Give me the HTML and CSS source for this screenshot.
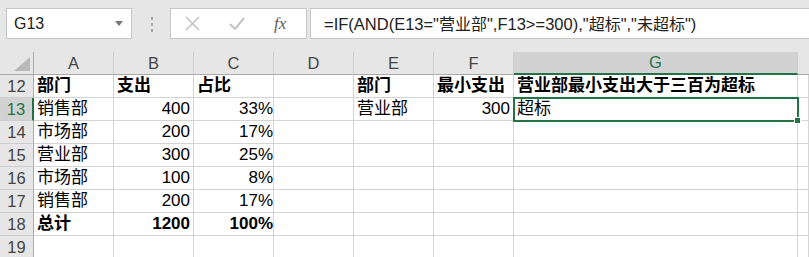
FILE: index.html
```html
<!DOCTYPE html>
<html lang="zh-CN">
<head>
    <meta charset="UTF-8">
    <title>Sheet</title>
    <link rel="stylesheet" href="styles.css">
</head>
<body>
    <div class="toolbar">
        <div class="namebox">
            <span>G13</span>
            <svg width="8" height="5" viewBox="0 0 8 5"><polygon points="0,0 8,0 4,5" fill="#777"/></svg>
        </div>
        <div class="grip"><i></i><i></i><i></i></div>
        <div class="fxbox">
            <svg width="15" height="15" viewBox="0 0 15 15"><path d="M1 1 L14 14 M14 1 L1 14" stroke="#c3c3c3" stroke-width="1.6" fill="none"/></svg>
            <svg width="16" height="13" viewBox="0 0 16 13"><path d="M1 7 L6 12 L15 1" stroke="#c3c3c3" stroke-width="2" fill="none"/></svg>
            <span class="fx">fx</span>
        </div>
        <div class="formula">=IF(AND(E13="<span class="zh">营业部</span>",F13&gt;=300),"<span class="zh">超标</span>","<span class="zh">未超标</span>")</div>
    </div>

    <div class="sheet">
        <!-- column headers -->
        <div class="hd corner"><svg width="16" height="14" viewBox="0 0 16 14"><polygon points="16,0 16,14 0,14" fill="#b9b9b9"/></svg></div>
        <div class="hd col">A</div>
        <div class="hd col">B</div>
        <div class="hd col">C</div>
        <div class="hd col">D</div>
        <div class="hd col">E</div>
        <div class="hd col">F</div>
        <div class="hd col active">G</div>
        <div class="hd col last"></div>

        <!-- 12 -->
        <div class="hd row">12</div>
        <div class="c b">部门</div>
        <div class="c b">支出</div>
        <div class="c b">占比</div>
        <div class="c"></div>
        <div class="c b">部门</div>
        <div class="c b">最小支出</div>
        <div class="c b">营业部最小支出大于三百为超标</div>
        <div class="c"></div>

        <!-- 13 -->
        <div class="hd row active">13</div>
        <div class="c">销售部</div>
        <div class="c r">400</div>
        <div class="c r pct">33%</div>
        <div class="c"></div>
        <div class="c">营业部</div>
        <div class="c r">300</div>
        <div class="c selected">超标</div>
        <div class="c"></div>

        <!-- 14 -->
        <div class="hd row">14</div>
        <div class="c">市场部</div>
        <div class="c r">200</div>
        <div class="c r pct">17%</div>
        <div class="c"></div>
        <div class="c"></div>
        <div class="c"></div>
        <div class="c"></div>
        <div class="c"></div>

        <!-- 15 -->
        <div class="hd row">15</div>
        <div class="c">营业部</div>
        <div class="c r">300</div>
        <div class="c r pct">25%</div>
        <div class="c"></div>
        <div class="c"></div>
        <div class="c"></div>
        <div class="c"></div>
        <div class="c"></div>

        <!-- 16 -->
        <div class="hd row">16</div>
        <div class="c">市场部</div>
        <div class="c r">100</div>
        <div class="c r pct">8%</div>
        <div class="c"></div>
        <div class="c"></div>
        <div class="c"></div>
        <div class="c"></div>
        <div class="c"></div>

        <!-- 17 -->
        <div class="hd row">17</div>
        <div class="c">销售部</div>
        <div class="c r">200</div>
        <div class="c r pct">17%</div>
        <div class="c"></div>
        <div class="c"></div>
        <div class="c"></div>
        <div class="c"></div>
        <div class="c"></div>

        <!-- 18 -->
        <div class="hd row">18</div>
        <div class="c b">总计</div>
        <div class="c b r">1200</div>
        <div class="c b r pct">100%</div>
        <div class="c"></div>
        <div class="c"></div>
        <div class="c"></div>
        <div class="c"></div>
        <div class="c"></div>

        <!-- 19 -->
        <div class="hd row">19</div>
        <div class="c"></div>
        <div class="c"></div>
        <div class="c"></div>
        <div class="c"></div>
        <div class="c"></div>
        <div class="c"></div>
        <div class="c"></div>
        <div class="c"></div>
    </div>
</body>
</html>
```

FILE: styles.css
```css
body {
    margin: 0;
    width: 809px;
    height: 257px;
    overflow: hidden;
    background: #ffffff;
    font-family: "Liberation Sans", "Noto Sans CJK SC", sans-serif;
}

.toolbar {
    height: 52px;
    background: #e6e6e6;
    display: flex;
    align-items: flex-start;
    padding: 8px 0 0 6px;
    box-sizing: border-box;
}

.namebox {
    width: 126px;
    height: 31px;
    box-sizing: border-box;
    background: #fff;
    border: 1px solid #c6c6c6;
    display: flex;
    align-items: center;
    justify-content: space-between;
    padding: 0 8px 0 7px;
    font-size: 16px;
    color: #222;
}

.grip {
    margin: 9px 0 0 19px;
    display: flex;
    flex-direction: column;
    gap: 3px;
}

.grip i {
    display: block;
    width: 2px;
    height: 3px;
    background: #a8a8a8;
}

.fxbox {
    margin-left: 17px;
    width: 137px;
    height: 31px;
    box-sizing: border-box;
    background: #fff;
    border: 1px solid #c6c6c6;
    display: flex;
    align-items: center;
    padding-left: 14px;
    gap: 29px;
}

.fx {
    font-family: "Liberation Serif", serif;
    font-style: italic;
    font-size: 17px;
    color: #5c5c5c;
}

.formula {
    margin-left: 3px;
    flex: 1;
    height: 31px;
    box-sizing: border-box;
    background: #fff;
    border: 1px solid #c6c6c6;
    border-right: none;
    padding-left: 13px;
    line-height: 29px;
    font-size: 16.5px;
    color: #222;
    white-space: nowrap;
}

.formula .zh {
    font-family: "Noto Sans CJK SC", sans-serif;
    font-size: 16px;
}

.sheet {
    display: grid;
    grid-template-columns: 34px repeat(6, 80px) 284px 1fr;
    grid-auto-rows: 23px;
}

.hd {
    box-sizing: border-box;
    background: #e6e6e6;
    color: #444;
    font-size: 16.5px;
    display: flex;
    align-items: center;
    justify-content: center;
}

.corner {
    justify-content: flex-end;
    align-items: flex-end;
    padding: 0 3px 3px 0;
    border-right: 1px solid #ababab;
    border-bottom: 1px solid #ababab;
}

.col {
    border-right: 1px solid #cdcdcd;
    border-bottom: 1px solid #ababab;
}

.col.last {
    border-right: none;
}

.row {
    border-right: 1px solid #ababab;
    border-bottom: 1px solid #cdcdcd;
}

.hd.active {
    background: #d2d2d2;
    color: #217346;
}

.col.active {
    border-bottom: 2px solid #217346;
}

.row.active {
    border-right: 2px solid #217346;
}

.c {
    box-sizing: border-box;
    border-right: 1px solid #d4d4d4;
    border-bottom: 1px solid #d4d4d4;
    padding: 0 3px;
    line-height: 22px;
    font-size: 17px;
    color: #000;
    white-space: nowrap;
    overflow: hidden;
}

.c.b {
    font-weight: bold;
}

.c.r {
    text-align: right;
}

.c.pct {
    padding-right: 0;
}

.selected {
    position: relative;
    overflow: visible;
    outline: 2px solid #217346;
    outline-offset: -1px;
}

.selected::after {
    content: "";
    position: absolute;
    right: -4px;
    bottom: -4px;
    width: 5px;
    height: 5px;
    background: #217346;
    border: 1px solid #fff;
}
```
